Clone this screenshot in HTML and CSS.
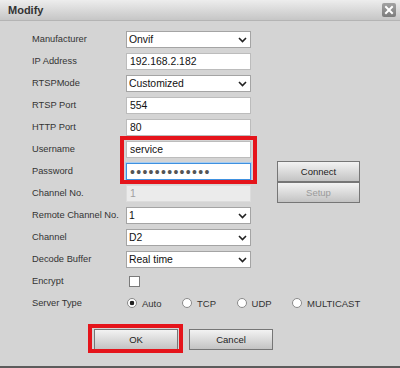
FILE: index.html
```html
<!DOCTYPE html>
<html lang="en">
<head>
    <meta charset="UTF-8">
    <meta name="viewport" content="width=device-width, initial-scale=1.0">
    <title>Modify</title>
    <link rel="stylesheet" href="styles.css">
</head>
<body>
    <div class="dialog">
        <div class="titlebar">
            <span class="title">Modify</span>
            <button type="button" class="close" title="Close">
                <svg width="10" height="10" viewBox="0 0 10 10"><path d="M2 2 L8 8 M8 2 L2 8" stroke="#fff" stroke-width="2" stroke-linecap="square"/></svg>
            </button>
        </div>

        <form class="modify-form" id="modifyForm">
            <div class="fields">
                <label for="manufacturer">Manufacturer</label>
                <div class="dropdown">
                    <select id="manufacturer" class="field"><option>Onvif</option></select>
                    <svg class="chevron" width="9" height="6" viewBox="0 0 9 6"><path d="M1 1 L4.5 4.5 L8 1" fill="none" stroke="#222" stroke-width="1.6"/></svg>
                </div>

                <label for="ipAddress">IP Address</label>
                <input type="text" id="ipAddress" class="field" value="192.168.2.182">

                <label for="rtspMode">RTSPMode</label>
                <div class="dropdown">
                    <select id="rtspMode" class="field"><option>Customized</option></select>
                    <svg class="chevron" width="9" height="6" viewBox="0 0 9 6"><path d="M1 1 L4.5 4.5 L8 1" fill="none" stroke="#222" stroke-width="1.6"/></svg>
                </div>

                <label for="rtspPort">RTSP Port</label>
                <input type="text" id="rtspPort" class="field" value="554">

                <label for="httpPort">HTTP Port</label>
                <input type="text" id="httpPort" class="field" value="80">

                <label for="username">Username</label>
                <div class="credentials mark">
                    <input type="text" id="username" class="field" value="service">
                    <input type="password" id="password" class="field password" value="1234567890123">
                </div>
                <label for="password">Password</label>

                <label for="channelNo">Channel No.</label>
                <input type="text" id="channelNo" class="field" value="1" disabled>

                <div class="side-buttons">
                    <button type="button" class="btn">Connect</button>
                    <button type="button" class="btn" disabled>Setup</button>
                </div>

                <label for="remoteChannel">Remote Channel No.</label>
                <div class="dropdown">
                    <select id="remoteChannel" class="field"><option>1</option></select>
                    <svg class="chevron" width="9" height="6" viewBox="0 0 9 6"><path d="M1 1 L4.5 4.5 L8 1" fill="none" stroke="#222" stroke-width="1.6"/></svg>
                </div>

                <label for="channel">Channel</label>
                <div class="dropdown">
                    <select id="channel" class="field"><option>D2</option></select>
                    <svg class="chevron" width="9" height="6" viewBox="0 0 9 6"><path d="M1 1 L4.5 4.5 L8 1" fill="none" stroke="#222" stroke-width="1.6"/></svg>
                </div>

                <label for="decodeBuffer">Decode Buffer</label>
                <div class="dropdown">
                    <select id="decodeBuffer" class="field"><option>Real time</option></select>
                    <svg class="chevron" width="9" height="6" viewBox="0 0 9 6"><path d="M1 1 L4.5 4.5 L8 1" fill="none" stroke="#222" stroke-width="1.6"/></svg>
                </div>

                <label for="encrypt">Encrypt</label>
                <input type="checkbox" id="encrypt" class="check">

                <label>Server Type</label>
                <div class="radios">
                    <label class="radio"><input type="radio" name="serverType" checked> Auto</label>
                    <label class="radio"><input type="radio" name="serverType"> TCP</label>
                    <label class="radio"><input type="radio" name="serverType"> UDP</label>
                    <label class="radio"><input type="radio" name="serverType"> MULTICAST</label>
                </div>
            </div>

            <div class="actions">
                <span class="mark mark-ok"><button type="submit" class="btn">OK</button></span>
                <button type="button" class="btn">Cancel</button>
            </div>
        </form>
    </div>
</body>
</html>
```

FILE: styles.css
```css
body {
    margin: 0;
    font-family: "Liberation Sans", Arial, sans-serif;
    background: #d4d4d4;
}
.dialog {
    height: 368px;
    box-sizing: border-box;
    border-bottom: 2px solid #5c5c5c;
    background: #d4d4d4;
}
.titlebar {
    height: 20px;
    border-bottom: 1px solid #b4b4b4;
    background: linear-gradient(#ededed, #c6c6c6);
    display: flex;
    align-items: center;
    justify-content: space-between;
    padding: 0 4px 0 8px;
}
.title {
    font-weight: bold;
    font-size: 11px;
    color: #333;
}
.close {
    width: 14px;
    height: 14px;
    padding: 0;
    border: none;
    border-radius: 2px;
    background: linear-gradient(#a2a2a2, #7c7c7c);
    display: flex;
    align-items: center;
    justify-content: center;
}
.modify-form {
    padding: 7px 0 0 32px;
}
.fields {
    display: grid;
    grid-template-columns: 94px 125px 26px 83px;
    grid-auto-rows: 22px;
}
.fields > label {
    grid-column: 1;
    align-self: center;
    font-size: 9.3px;
    color: #333;
    white-space: nowrap;
}
.fields > .field,
.fields > .dropdown,
.fields > .check {
    grid-column: 2;
}
.field {
    display: block;
    width: 125px;
    height: 17px;
    margin: 3px 0 0;
    padding: 0 3px;
    box-sizing: border-box;
    border: 1px solid #bcbcbc;
    border-radius: 0;
    background: #fff;
    font-family: "Liberation Sans", Arial, sans-serif;
    font-size: 10.4px;
    color: #111;
    outline: none;
}
select.field {
    appearance: none;
    border-color: #a4a4a4;
    padding-left: 2px;
}
.field:disabled {
    background: #ebebeb;
    border-color: #dcdcdc;
    color: #a0a0a0;
}
.dropdown {
    position: relative;
}
.chevron {
    position: absolute;
    right: 4px;
    top: 9px;
    pointer-events: none;
}
.credentials {
    grid-column: 2;
    grid-row: 6 / span 2;
    display: grid;
    grid-template-rows: 22px 22px;
}
.password {
    border: 1px solid #3f91e0;
    box-shadow: 0 0 0 1px #a8cdf1;
    font-size: 14px;
    letter-spacing: 1.3px;
    line-height: 15px;
    color: #555;
}
.side-buttons {
    grid-column: 4;
    grid-row: 7 / span 2;
    display: flex;
    flex-direction: column;
    padding-top: 1px;
}
.side-buttons .btn {
    width: 83px;
}
.btn {
    width: 84px;
    height: 21px;
    padding: 0;
    border: 1px solid #767676;
    border-radius: 0;
    background: linear-gradient(#f3f3f3, #c3c3c3);
    font-family: "Liberation Sans", Arial, sans-serif;
    font-size: 9.5px;
    color: #222;
}
.btn:disabled {
    color: #9a9a9a;
}
.check {
    appearance: none;
    align-self: center;
    width: 11px;
    height: 11px;
    margin: 0 0 0 3px;
    border: 1px solid #7a7a7a;
    background: #fff;
}
.radios {
    grid-column: 2 / span 3;
    display: flex;
    align-items: center;
    gap: 20.5px;
    padding-left: 1px;
}
.radio {
    display: flex;
    align-items: center;
    gap: 5px;
    font-size: 9.5px;
    color: #333;
}
.radio input {
    appearance: none;
    width: 10px;
    height: 10px;
    margin: 0;
    border: 1px solid #8a8a8a;
    border-radius: 50%;
    background: #fff;
}
.radio input:checked {
    background: radial-gradient(circle, #222 0 2px, #fff 2.6px);
}
.actions {
    display: flex;
    gap: 11px;
    margin-top: 15px;
    padding-left: 62px;
}
.mark {
    position: relative;
}
.mark::after {
    content: "";
    position: absolute;
    inset: -2px -6px;
    border: 4px solid #e5141b;
    pointer-events: none;
}
.mark-ok {
    display: block;
}
.mark-ok::after {
    inset: -5px -5px -3px -6px;
}
```
